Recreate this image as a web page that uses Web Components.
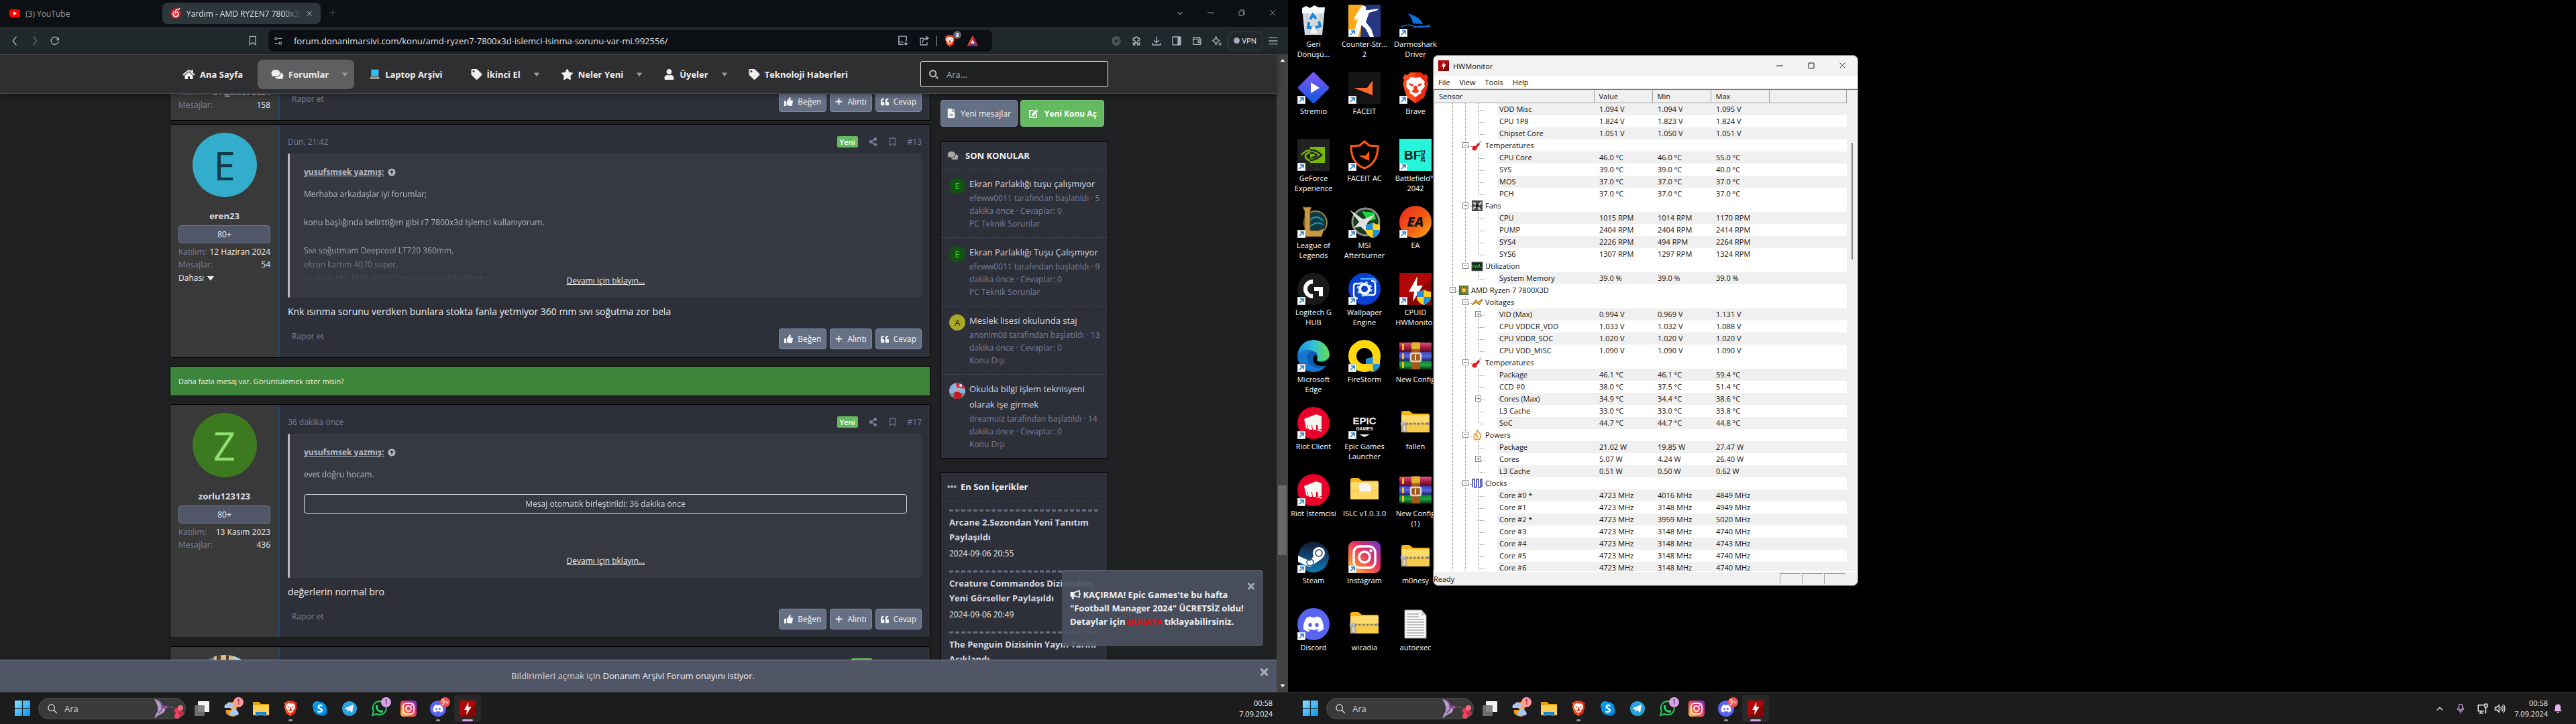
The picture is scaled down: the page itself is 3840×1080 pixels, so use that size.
<!DOCTYPE html>
<html lang="tr">
<head>
<meta charset="utf-8">
<title>Yardım - AMD RYZEN7 7800x3D</title>
<style>
  html, body { height: 100%; }
  body {
    margin: 0;
    display: flex;
    overflow: hidden;
    background: #000;
    color: #eee;
    font-family: "Open Sans", "Noto Sans", sans-serif;
    font-size: 12px;
  }
  browser-screen, desktop-screen { flex: 1 1 0; min-width: 0; }
</style>
</head>
<body>
<browser-screen></browser-screen>
<desktop-screen></desktop-screen>

<script>
// ---------- icons ----------
const fa = (w, d) => `<svg viewBox="0 0 ${w} 512" fill="currentColor"><path d="${d}"/></svg>`;
const line = (body, w = 2) => `<svg viewBox="0 0 24 24" fill="none" stroke="currentColor" stroke-width="${w}" stroke-linecap="round" stroke-linejoin="round">${body}</svg>`;
const app = (body) => `<svg viewBox="0 0 48 48">${body}</svg>`;

const lion = `<path d="M24 1h8l4 4 4-1 3 5-2 3 2 6-6 20-13 9L11 38 5 18l2-6-2-3 3-5 4 1 4-4z" fill="#ff4a1c"/><path d="M24 1h8l4 4 4-1 3 5-2 3 2 6-6 20-13 9z" fill="#f0280f"/>
<path d="M24 9l7-1 7 7-1 3 1 4-6 7 1 3-5 2-4-3-4 3-5-2 1-3-6-7 1-4-1-3 7-7z" fill="#fff"/><path d="M15 17l6 2-1 3-5-2zM33 17l-6 2 1 3 5-2zM22 21h4l1 6 3 2-6 4-6-4 3-2z" fill="#f2371a"/><path d="M24 31l5 3-5 4-5-4z" fill="#fff"/>`;
const shield = `<g transform="translate(26 25)"><path d="M10.500 0C7 2 4 3 0 3v8c0 6 5 10 10.500 12C16 21 21 17 21 11V3c-4 0-7-1-10.500-3z" fill="#fcd116"/><path d="M10.500 0C7 2 4 3 0 3v8h10.500zM10.500 11v12C16 21 21 17 21 11z" fill="#1e90e0"/></g>`;
const insta = `<defs><linearGradient id="ig" x1="0" y1="1" x2="1" y2="0"><stop offset="0" stop-color="#ffd35c"/><stop offset=".3" stop-color="#f9743a"/><stop offset=".6" stop-color="#e1306c"/><stop offset="1" stop-color="#6a35d0"/></linearGradient></defs>
<rect width="48" height="48" rx="9" fill="url(#ig)"/><g fill="none" stroke="#fff" stroke-width="3.500"><rect x="8" y="8" width="32" height="32" rx="9"/><circle cx="24" cy="24" r="8"/></g><circle cx="33.500" cy="14.500" r="2.300" fill="#fff"/>`;
const fist = `<circle cx="24" cy="24" r="24" fill="#eb0029"/><path d="M10 18l18-7 8 3v19l-5 1-1-7-2 0v7h-5l-1-7h-1l1 7-5 0-2-7h-1l2 6-3-1zM25 34l11 1v2z" fill="#f4f6f0"/>`;
const folder = `<path d="M3 9a3 3 0 0 1 3-3h9l5 4h23a2 2 0 0 1 2 2v25H3z" fill="#fbb519"/><rect x="3" y="12" width="42" height="26" rx="2" fill="#ffdb6e"/><rect x="3" y="24" width="42" height="14" rx="2" fill="#f7cb4c"/>`;
const zip = folder + `<path d="M8 25h37" stroke="#6e6e6e" stroke-width="3" stroke-dasharray="1 1"/><rect x="2" y="22" width="8" height="6" rx="1" fill="#bbb"/><path d="M5 27h5v10H5z" fill="#d8d8d8" stroke="#888"/><rect x="41" y="23" width="4" height="4" fill="#999"/>`;
const books = `<defs><linearGradient id="r" x1="0" y1="0" x2="0" y2="1"><stop offset="0" stop-color="#e2557b"/><stop offset=".5" stop-color="#a81d45"/><stop offset="1" stop-color="#5b0b22"/></linearGradient><linearGradient id="b" x1="0" y1="0" x2="0" y2="1"><stop offset="0" stop-color="#3b3fb0"/><stop offset=".5" stop-color="#5c68e0"/><stop offset="1" stop-color="#1b1d6b"/></linearGradient><linearGradient id="g" x1="0" y1="0" x2="0" y2="1"><stop offset="0" stop-color="#12762a"/><stop offset=".5" stop-color="#21a845"/><stop offset="1" stop-color="#063c10"/></linearGradient></defs>
<rect y="4" width="48" height="14" rx="1" fill="url(#r)"/><rect y="18" width="48" height="13" rx="1" fill="url(#b)"/><rect y="31" width="48" height="13" rx="1" fill="url(#g)"/><path d="M4 6h3v9H4zM4 20h3v9H4zM4 33h3v9H4z" fill="#f5b921"/><rect x="18" y="3" width="13" height="41" fill="#a65a1a"/><rect x="18" y="4" width="13" height="10" rx="3" fill="#e0b232"/><rect x="17" y="20" width="15" height="12" rx="2" fill="none" stroke="#d9d9d9" stroke-width="2.500"/><path d="M24 22v8" stroke="#eee" stroke-width="2"/>`;
const bolt = `<rect width="48" height="48" fill="#b00606"/><path d="M0 48L48 10v38z" fill="#8a0505"/><path d="M27 5L14 28h8l-2 15 15-24h-9z" fill="#fff"/>`;
const discordMark = `<path d="M20.317 4.3698a19.7913 19.7913 0 00-4.8851-1.5152.0741.0741 0 00-.0785.0371c-.211.3753-.4447.8648-.6083 1.2495-1.8447-.2762-3.68-.2762-5.4868 0-.1636-.3933-.4058-.8742-.6177-1.2495a.077.077 0 00-.0785-.037 19.7363 19.7363 0 00-4.8852 1.515.0699.0699 0 00-.0321.0277C.5334 9.0458-.319 13.5799.0992 18.0578a.0824.0824 0 00.0312.0561c2.0528 1.5076 4.0413 2.4228 5.9929 3.0294a.0777.0777 0 00.0842-.0276c.4616-.6304.8731-1.2952 1.226-1.9942a.076.076 0 00-.0416-.1057c-.6528-.2476-1.2743-.5495-1.8722-.8923a.077.077 0 01-.0076-.1277c.1258-.0943.2517-.1923.3718-.2914a.0743.0743 0 01.0776-.0105c3.9278 1.7933 8.18 1.7933 12.0614 0a.0739.0739 0 01.0785.0095c.1202.099.246.1981.3728.2924a.077.077 0 01-.0066.1276 12.2986 12.2986 0 01-1.873.8914.0766.0766 0 00-.0407.1067c.3604.698.7719 1.3628 1.225 1.9932a.076.076 0 00.0842.0286c1.961-.6067 3.9495-1.5219 6.0023-3.0294a.077.077 0 00.0313-.0552c.5004-5.177-.8382-9.6739-3.5485-13.6604a.061.061 0 00-.0312-.0286zM8.02 15.3312c-1.1825 0-2.1569-1.0857-2.1569-2.419 0-1.3332.9555-2.4189 2.157-2.4189 1.2108 0 2.1757 1.0952 2.1568 2.419 0 1.3332-.9555 2.4189-2.1569 2.4189zm7.9748 0c-1.1825 0-2.1569-1.0857-2.1569-2.419 0-1.3332.9554-2.4189 2.1569-2.4189 1.2108 0 2.1757 1.0952 2.1568 2.419 0 1.3332-.946 2.4189-2.1568 2.4189Z"/>`;
const discord = `<circle cx="24" cy="24" r="24" fill="#5865f2"/><g transform="translate(9 9) scale(1.250)" fill="#fff">${discordMark}</g>`;

const ICONS = {
  home: fa(576, "M280.37 148.26L96 300.11V464a16 16 0 0 0 16 16l112.06-.29a16 16 0 0 0 15.92-16V368a16 16 0 0 1 16-16h64a16 16 0 0 1 16 16v95.64a16 16 0 0 0 16 16.05L464 480a16 16 0 0 0 16-16V300L295.67 148.26a12.19 12.19 0 0 0-15.3 0zM571.6 251.47L488 182.56V44.05a12 12 0 0 0-12-12h-56a12 12 0 0 0-12 12v72.61L318.47 43a48 48 0 0 0-61 0L4.34 251.47a12 12 0 0 0-1.6 16.9l25.5 31A12 12 0 0 0 45.15 301l235.22-193.74a12.19 12.19 0 0 1 15.3 0L530.9 301a12 12 0 0 0 16.9-1.6l25.5-31a12 12 0 0 0-1.7-16.93z"),
  comments: fa(576, "M416 192c0-88.4-93.1-160-208-160S0 103.6 0 192c0 34.3 14.1 65.9 38 92-13.4 30.2-35.5 54.2-35.8 54.5-2.2 2.3-2.8 5.7-1.5 8.7S4.8 352 8 352c36.6 0 66.9-12.3 88.7-25 32.2 15.7 70.3 25 111.3 25 114.9 0 208-71.6 208-160zm122 220c23.9-26 38-57.7 38-92 0-66.9-53.5-124.2-129.3-148.1.9 6.6 1.3 13.3 1.3 20.1 0 105.9-107.7 192-240 192-10.8 0-21.3-.8-31.7-1.9C207.8 439.6 281.8 480 368 480c41 0 79.1-9.2 111.3-25 21.8 12.7 52.1 25 88.7 25 3.2 0 6.1-1.9 7.3-4.8 1.3-2.9.7-6.3-1.5-8.7-.3-.3-22.4-24.2-35.8-54.5z"),
  tag: fa(512, "M0 252.118V48C0 21.49 21.49 0 48 0h204.118a48 48 0 0 1 33.941 14.059l211.882 211.882c18.745 18.745 18.745 49.137 0 67.882L293.823 497.941c-18.745 18.745-49.137 18.745-67.882 0L14.059 286.059A48 48 0 0 1 0 252.118zM112 64c-26.51 0-48 21.49-48 48s21.49 48 48 48 48-21.49 48-48-21.49-48-48-48z"),
  star: fa(576, "M259.3 17.8L194 150.2 47.9 171.5c-26.2 3.8-36.7 36.1-17.7 54.6l105.7 103-25 145.5c-4.5 26.3 23.2 46 46.4 33.7L288 439.6l130.7 68.7c23.2 12.2 50.9-7.4 46.4-33.7l-25-145.5 105.7-103c19-18.5 8.5-50.8-17.7-54.6L382 150.2 316.7 17.8c-11.7-23.6-45.6-23.9-57.4 0z"),
  user: fa(448, "M224 256c70.7 0 128-57.3 128-128S294.7 0 224 0 96 57.3 96 128s57.3 128 128 128zm89.6 32h-16.7c-22.2 10.2-46.9 16-72.9 16s-50.6-5.8-72.9-16h-16.7C60.2 288 0 348.2 0 422.4V464c0 26.5 21.5 48 48 48h352c26.5 0 48-21.5 48-48v-41.6c0-74.2-60.2-134.4-134.4-134.4z"),
  search: fa(512, "M505 442.7L405.3 343c-4.5-4.5-10.6-7-17-7H372c27.6-35.3 44-79.7 44-128C416 93.1 322.9 0 208 0S0 93.1 0 208s93.1 208 208 208c48.3 0 92.7-16.4 128-44v16.3c0 6.4 2.5 12.5 7 17l99.7 99.7c9.4 9.4 24.6 9.4 33.9 0l28.3-28.3c9.4-9.4 9.4-24.6.1-34zM208 336c-70.7 0-128-57.2-128-128 0-70.7 57.2-128 128-128 70.7 0 128 57.2 128 128 0 70.7-57.2 128-128 128z"),
  thumb: fa(512, "M104 224H24c-13.255 0-24 10.745-24 24v240c0 13.255 10.745 24 24 24h80c13.255 0 24-10.745 24-24V248c0-13.255-10.745-24-24-24zM384 81.452c0 42.416-25.97 66.208-33.277 94.548h101.723c33.397 0 59.397 27.746 59.553 58.098.084 17.938-7.546 37.249-19.439 49.197l-.11.11c9.836 23.337 8.237 56.037-9.308 79.469 8.681 25.895-.069 57.704-16.382 74.757 4.298 17.598 2.244 32.575-6.148 44.632C440.202 511.587 389.616 512 346.839 512l-2.845-.001c-48.287-.017-87.806-17.598-119.56-31.725-15.957-7.099-36.821-15.887-52.651-16.178-6.54-.12-11.783-5.457-11.783-11.998v-213.77c0-3.2 1.282-6.271 3.558-8.521 39.614-39.144 56.648-80.587 89.117-113.111 14.804-14.832 20.188-37.236 25.393-58.902C282.515 39.293 291.817 0 312 0c24 0 72 8 72 81.452z"),
  plus: fa(512, "M214 32h84v182h182v84H298v182h-84V298H32v-84h182z"),
  quote: fa(512, "M464 256h-80v-64c0-35.3 28.7-64 64-64h8c13.3 0 24-10.7 24-24V56c0-13.3-10.7-24-24-24h-8c-88.4 0-160 71.6-160 160v240c0 26.5 21.5 48 48 48h128c26.5 0 48-21.5 48-48V304c0-26.5-21.5-48-48-48zm-288 0H96v-64c0-35.3 28.7-64 64-64h8c13.3 0 24-10.7 24-24V56c0-13.3-10.7-24-24-24h-8C71.6 32 0 103.6 0 192v240c0 26.5 21.5 48 48 48h128c26.5 0 48-21.5 48-48V304c0-26.5-21.5-48-48-48z"),
  share: fa(448, "M352 320c-22.608 0-43.387 7.819-59.79 20.895l-102.486-64.054a96.551 96.551 0 0 0 0-41.683l102.486-64.054C308.613 184.181 329.392 192 352 192c53.019 0 96-42.981 96-96S405.019 0 352 0s-96 42.981-96 96c0 7.158.79 14.13 2.276 20.841L155.79 180.895C139.387 167.819 118.608 160 96 160c-53.019 0-96 42.981-96 96s42.981 96 96 96c22.608 0 43.387-7.819 59.79-20.895l102.486 64.054A96.301 96.301 0 0 0 256 416c0 53.019 42.981 96 96 96s96-42.981 96-96-42.981-96-96-96z"),
  times: fa(352, "M242.72 256l100.07-100.07c12.28-12.28 12.28-32.19 0-44.48l-22.24-22.24c-12.28-12.28-32.19-12.28-44.48 0L176 189.28 75.93 89.21c-12.28-12.28-32.19-12.28-44.48 0L9.21 111.45c-12.28 12.28-12.28 32.19 0 44.48L109.28 256 9.21 356.07c-12.28 12.28-12.28 32.19 0 44.48l22.24 22.24c12.28 12.28 32.2 12.28 44.48 0L176 322.72l100.07 100.07c12.28 12.28 32.2 12.28 44.48 0l22.24-22.24c12.28-12.28 12.28-32.19 0-44.48L242.72 256z"),
  caret: fa(512, "M40 130h432L256 420z"),
  caretUp: fa(512, "M40 400h432L256 130z"),
  file: fa(384, "M224 136V0H24C10.700 0 0 10.700 0 24v464c0 13.300 10.700 24 24 24h336c13.300 0 24-10.700 24-24V160H248c-13.200 0-24-10.800-24-24zm64 236c0 6.600-5.400 12-12 12H108c-6.600 0-12-5.400-12-12v-8c0-6.600 5.400-12 12-12h168c6.600 0 12 5.400 12 12v8zm0-72v8c0 6.600-5.400 12-12 12H108c-6.600 0-12-5.400-12-12v-8c0-6.600 5.400-12 12-12h168c6.600 0 12 5.400 12 12zm96-178v6H256V0h6.100c6.400 0 12.500 2.500 17 7l97.900 98c4.500 4.500 7 10.600 7 17z"),
  edit: `<svg viewBox="0 0 24 24"><path d="M13 5H3v16h16v-9" fill="none" stroke="currentColor" stroke-width="3"/><path d="M8 13L18 3l4 4-10 10H8zM19 2l1-1 4 4-1 1z" fill="currentColor"/></svg>`,
  dots: `<svg viewBox="0 0 24 24" fill="currentColor"><circle cx="4" cy="12" r="3.600"/><circle cx="12" cy="12" r="3.600"/><circle cx="20" cy="12" r="3.600"/></svg>`,
  horn: `<svg viewBox="0 0 24 24" fill="none" stroke="currentColor"><path d="M9 7.500L21 3v15L9 14.500" stroke-width="2.500"/><path d="M1 6h9v10H1zM3 16h5l1 6H5z" fill="currentColor" stroke="none"/><path d="M22 8v5" stroke-width="3"/></svg>`,
  up: `<svg viewBox="0 0 24 24"><circle cx="12" cy="12" r="11" fill="currentColor"/><path d="M12 18V7M7 12l5-5 5 5" stroke="#363942" stroke-width="3" fill="none"/></svg>`,
  bookmark: line(`<path d="M5 2h14v20l-7-5-7 5z"/>`),
  laptop: `<svg viewBox="0 0 24 24"><rect x="4" y="1" width="17" height="14" fill="#8a7fb5"/><rect x="5" y="2" width="15" height="12" fill="#27c3fb"/><path d="M4 16h17l2 6H1z" fill="#bdbdbd"/><path d="M4 17h16v3H4z" fill="#8d8d8d"/></svg>`,
  back: line(`<path d="M15 3l-7 9 7 9"/>`), fwd: line(`<path d="M9 3l7 9-7 9"/>`),
  reload: line(`<path d="M20 14a8.500 8.500 0 1 1-1-7"/><path d="M20 5v5h-5" fill="currentColor"/>`),
  tune: line(`<circle cx="6" cy="6" r="3"/><path d="M12 6h9M3 18h9"/><circle cx="17" cy="18" r="3"/>`),
  reader: line(`<path d="M20 12V3H4v17h9M4 15h9M19 14v7m-3-3l3 3 3-3"/>`),
  send: line(`<path d="M10 6H3v15h15v-5M8 16c0-7 4-10 12-10M16 2l5 4-5 4"/>`),
  chev: line(`<path d="M5 9l7 7 7-7"/>`, 3), chevUp: line(`<path d="M5 16l7-7 7 7"/>`, 2),
  min: line(`<path d="M3 12h18"/>`, 2), max: line(`<rect x="4" y="4" width="16" height="16" rx="2"/>`, 2),
  restore: line(`<rect x="4" y="7" width="13" height="14" rx="2"/><path d="M8 4h11q1 0 1 1v12"/>`, 2),
  close: line(`<path d="M4 4l16 16M20 4L4 20"/>`, 2), add: line(`<path d="M12 3v18M3 12h18"/>`, 2),
  ring: line(`<circle cx="12" cy="12" r="9"/><circle cx="12" cy="12" r="5"/>`, 2),
  puzzle: line(`<path d="M5 6h4a3 3 0 1 1 6 0h4v5a3 3 0 1 0 0 5v5h-5a3 3 0 1 0-5 0H5v-5a3 3 0 1 0 0-5z"/>`),
  down: line(`<path d="M12 3v13m-5-5l5 5 5-5M3 17v4h18v-4"/>`),
  panel: line(`<rect x="3" y="3" width="18" height="18" rx="1"/><path d="M15 4h5v16h-5z" fill="currentColor"/>`),
  wallet: line(`<path d="M4 4h15v4M4 4v16h17V8H4M21 12h-6v4h6"/>`),
  leo: line(`<path d="M10 2c1 6 3 8 8 9-5 2-7 4-8 10-1-6-3-8-8-10 5-1 7-3 8-9zM19 16v6m-3-3h6"/>`),
  menu: line(`<path d="M3 5h18M3 12h18M3 19h18"/>`),
  glass: line(`<circle cx="10" cy="10" r="7"/><path d="M15.500 15.500L22 22"/>`, 2),
  youtube: `<svg viewBox="0 0 24 24"><rect y="3" width="24" height="18" rx="5" fill="#f00"/><path d="M9 8l8 4-8 4z" fill="#fff"/></svg>`,
  forum: `<svg viewBox="0 0 24 24"><circle cx="12" cy="12" r="11.500" fill="#d51c22"/><path d="M9 8a6 6 0 1 0 6 0M12 5v9M12 4c6-1 8-2 9-4" fill="none" stroke="#fff" stroke-width="2.500"/></svg>`,
  bat: `<svg viewBox="0 0 24 24"><path d="M12 1l11 21H1z" fill="#ff4724"/><path d="M12 1l11 21-11-7z" fill="#9e1f63"/><path d="M1 22l11-7 11 7z" fill="#662d91"/><path d="M12 10l4 7H8z" fill="#fff"/></svg>`,
  brave: app(lion),
  win: `<svg viewBox="0 0 24 24"><defs><linearGradient id="w" x1="0" y1="0" x2="1" y2="1"><stop offset="0" stop-color="#86e0ff"/><stop offset="1" stop-color="#0a94f0"/></linearGradient></defs><path d="M0 0h11.400v11.400H0zM12.600 0H24v11.400H12.600zM0 12.600h11.400V24H0zM12.600 12.600H24V24H12.600z" fill="url(#w)"/></svg>`,
  bird: `<svg viewBox="0 0 46 32"><path d="M2 2c7 1 12 6 13 12l8-1-5 4c0 6-6 7-10 9l-6 5 3-8c4-4 3-12-3-21z" fill="#b59bc6"/><path d="M8 4c5 3 6 8 5 14l-5 5" fill="none" stroke="#7d5d99" stroke-width="2"/><path d="M12 15l5-4 6 2-5 3z" fill="#9c3dab"/><path d="M23 13l9 2" stroke="#666"/><circle cx="36" cy="19" r="4" fill="#e83d5d"/><circle cx="41" cy="15" r="4" fill="#f46c7c"/><circle cx="42" cy="23" r="4" fill="#c92a48"/><circle cx="36" cy="27" r="4" fill="#ea4766"/></svg>`,
  tasks: `<svg viewBox="0 0 24 24"><rect x="6" y="1" width="17" height="16" rx="1" fill="#f4f4f4"/><rect x="1" y="7" width="15" height="16" rx="1" fill="#777" opacity=".9"/></svg>`,
  weather: `<svg viewBox="0 0 24 24"><circle cx="15" cy="8" r="6" fill="#ffb01e"/><path d="M4 14a10 8 0 0 0 16 8l-8-8z" fill="#f39a20"/><path d="M2 11a4 4 0 0 1 3-6 5 5 0 0 1 9 0q3 3 0 6zM10 22a4 4 0 0 1 2-6 4 4 0 0 1 8-1q4 2 2 7z" fill="#a9c4f5"/></svg>`,
  explorer: `<svg viewBox="0 0 24 24"><path d="M0 2h9l3 3h12v17H0z" fill="#e8a30c"/><path d="M0 7h24v15H0z" fill="#ffd04f"/><path d="M4 23v-6h16v6h-4v-2H8v2z" fill="#1583d8"/></svg>`,
  skype: `<svg viewBox="0 0 24 24"><circle cx="8" cy="8" r="7" fill="#00a8f0"/><circle cx="16" cy="16" r="7" fill="#0078d4"/><circle cx="12" cy="12" r="10" fill="#0594e5"/><text x="12" y="18" font-size="16" font-weight="700" text-anchor="middle" fill="#fff">S</text></svg>`,
  telegram: `<svg viewBox="0 0 24 24"><circle cx="12" cy="12" r="11" fill="#2ba2de"/><path d="M4 12l14-6-2 12-5-4-2 3-1-4z" fill="#fff"/><path d="M8 13l8-5-6 6" fill="#a9cfe5"/></svg>`,
  whatsapp: `<svg viewBox="0 0 24 24"><path d="M2 22l2-6a10 10 0 1 1 4 4z" fill="none" stroke="#25d366" stroke-width="2"/><path d="M8 7l2 0 1 3-1 1q1 3 4 4l1-1 3 1v2q-2 2-4 1-6-2-7-7-1-2 1-4z" fill="#25d366"/></svg>`,
  instagram: app(insta), discord: app(discord), hwm: app(bolt),
  tray: line(`<path d="M14 5H3v12h11M8 17v4M5 21h8M16 3h5v6h-5zM18 9v12"/>`, 2),
  mic: line(`<rect x="8" y="2" width="8" height="13" rx="4"/><path d="M5 11a7 7 0 0 0 14 0M12 18v4"/>`),
  vol: line(`<path d="M2 9v6h4l5 5V4L6 9zM15 9q2 3 0 6M18 6q4 6 0 12M21 3q6 9 0 18"/>`, 2),
  bell: `<svg viewBox="0 0 24 24" fill="#e7b3f0"><path d="M12 1a7 7 0 0 1 7 7v6l3 5H2l3-5V8a7 7 0 0 1 7-7zM9 20h6a3 3 0 0 1-6 0z"/></svg>`,
  flag: app(`<clipPath id="fc"><circle cx="24" cy="24" r="24"/></clipPath><g clip-path="url(#fc)"><rect width="48" height="48" fill="#8db4de"/><path d="M0 30h48v18H0z" fill="#8b8580"/><path d="M20 0h28v18l-26-4z" fill="#e2263c"/><circle cx="34" cy="8" r="4" fill="#fff"/><path d="M12 48l4-20 10-2 10 6 3 16z" fill="#c31a24"/><circle cx="25" cy="21" r="5" fill="#d6a483"/></g>`),
  photo: app(`<clipPath id="pc"><circle cx="24" cy="24" r="24"/></clipPath><g clip-path="url(#pc)"><rect width="48" height="48" fill="#4a6d8c"/><path d="M16 0h16v30H14z" fill="#d8bc8e"/><path d="M18 0h3v20h-3zM25 0h2v20h-2z" fill="#4f3a2c"/><path d="M31 0h17v30H30z" fill="#a4dcea"/></g>`),
  // desktop
  bin: app(`<path d="M7 5l34-1-4 41-26 0z" fill="#d5d9dd"/><path d="M7 5l6-3 6 3 6-4 7 3 9 0-2 9-32 0z" fill="#f7f8f9"/><path d="M13 14l6 30M35 14l-5 30M24 30l-8 14h18z" stroke="#b7bdc2" fill="#eef0f2"/><g fill="none" stroke="#1984d8" stroke-width="4"><path d="M19 22l4-7 5 6M32 25l2 7-7 2M21 34h-5l1-8"/></g>`),
  cs: app(`<rect width="48" height="48" fill="#fba919"/><path d="M22 0h26v48H18z" fill="#27377f"/><path d="M18 5q3-6 8-2v5l4 0 14-2v2l-13 4-3 8-2 6 8 10 4 12h-6l-6-12-7-6-2 9-3 9h-5l2-18 4-10-5 4-1-5 6-10z" fill="#fff"/>`),
  shark: app(`<path d="M12 13q18 4 23 16l-15-1q-1-9-8-15z" fill="#0a6fe0"/><path d="M2 33q12-5 20-1t24-2M20 34q12-3 26-1" fill="none" stroke="#0a6fe0" stroke-width="1.500"/>`),
  stremio: app(`<defs><linearGradient id="s" x1="0" y1="0" x2="1" y2="1"><stop offset="0" stop-color="#8257ff"/><stop offset="1" stop-color="#1157dd"/></linearGradient></defs><rect x="7" y="7" width="34" height="34" rx="2" transform="rotate(45 24 24)" fill="url(#s)"/><path d="M20 16l13 8-13 8z" fill="#fff"/>`),
  faceit: app(`<rect width="48" height="48" rx="1" fill="#151515"/><path d="M8 24l20 0 8-11v22z" fill="#ff6a2b"/>`),
  nvidia: app(`<rect width="48" height="48" fill="#222"/><rect x="19" y="12" width="22" height="24" fill="#76b900"/><path d="M6 24q12-14 30 0-14 14-22 6-6-6 5-10 7-1 11 4-5 6-9 3-2-4 3-5" fill="none" stroke="#76b900" stroke-width="2.500"/><path d="M19 17q9-1 17 7-8 8-17 8M19 21q8 0 10 4-4 4-9 3" fill="none" stroke="#222" stroke-width="2.500"/>`),
  faceitac: app(`<path d="M24 4l7 6 13 1q0 26-20 33Q4 37 4 11l13-1z" fill="none" stroke="#ff5a0a" stroke-width="3"/><path d="M15 25l11 0 5-7v15z" fill="#ff5a0a"/>`),
  bf: app(`<rect width="48" height="48" fill="#27f5d9"/><text x="7" y="31" font-size="19" font-family="Liberation Sans" font-weight="700" fill="#0a1a1c">BF</text><g transform="translate(38 35) rotate(-90)"><text font-size="8" font-weight="700" fill="#0a1a1c">2042</text></g>`),
  lol: app(`<circle cx="27" cy="25" r="17" fill="#0b3a45" stroke="#a87a32" stroke-width="2"/><path d="M18 22q10-10 20 0M20 30q10-8 18-2" fill="none" stroke="#2a9aa0" stroke-width="2"/><path d="M8 2h13l-2 5v30h13l8-3-4 12H8l3-6V8z" fill="#c9994a" stroke="#6b4816"/>`),
  msi: app(`<circle cx="26" cy="24" r="20" fill="#153b1b" stroke="#8b8b8b" stroke-width="3"/><path d="M20 8l18 2 3 10-12 3z" fill="#17d73b"/><path d="M2 6l20 14 18-7-12 13 2 16-12-11-10 2 8-9z" fill="#dfe0e0"/>` + shield),
  ea: app(`<defs><linearGradient id="e" x1="0" y1="0" x2="1" y2="1"><stop offset="0" stop-color="#e8241b"/><stop offset=".6" stop-color="#f26414"/><stop offset="1" stop-color="#f7b417"/></linearGradient></defs><circle cx="24" cy="24" r="24" fill="url(#e)"/><text x="24" y="31" font-size="20" font-style="italic" font-weight="800" text-anchor="middle" fill="#14100f">EA</text>`),
  ghub: app(`<circle cx="24" cy="24" r="24" fill="#1a1a1a"/><path d="M23 13a11 11 0 0 0 0 22M25 24h10v11" fill="none" stroke="#fff" stroke-width="6"/>`),
  wallpaper: app(`<circle cx="24" cy="24" r="24" fill="#0a3fd0"/><path d="M14 38q-6 0-6-6V20q0-4 4-4h16M34 12q6 0 6 5v12q0 4-4 4H22" fill="none" stroke="#fff" stroke-width="2.500"/><path d="M18 9h18q5 0 5 6" fill="none" stroke="#4fb4ff" stroke-width="2.500"/><circle cx="24" cy="24" r="7" fill="none" stroke="#fff" stroke-width="4"/><circle cx="24" cy="24" r="10" fill="none" stroke="#9ed2ff" stroke-width="3" stroke-dasharray="4 4"/>`),
  cpuid: app(bolt + shield),
  edge: app(`<defs><linearGradient id="eg" x1="0" y1="0" x2="1" y2="0"><stop offset="0" stop-color="#1890e0"/><stop offset=".5" stop-color="#35c1d8"/><stop offset="1" stop-color="#62e04c"/></linearGradient></defs><clipPath id="ec"><circle cx="24" cy="24" r="24"/></clipPath><g clip-path="url(#ec)"><circle cx="24" cy="24" r="24" fill="#0d5cae"/><path d="M0 22Q3 0 25 0q21 2 23 20 0 11-13 12-8 0-6-6 3-6-5-9-14-4-24 5z" fill="url(#eg)"/><path d="M0 22q10-11 22-6-12 6-5 19 10 11 27 5Q32 52 14 46-1 38 0 22z" fill="#1476cf"/><path d="M30 27q-3 6 6 6 8 0 12-7v8l-4 4q-18 4-21-8 0-6 4-8 3 2 3 5z" fill="#000"/></g>`),
  firestorm: app(`<circle cx="24" cy="24" r="18" fill="none" stroke="#ffd90a" stroke-width="12"/>` + shield),
  riot: app(fist),
  epic: app(`<g fill="#f2f2f2" font-weight="700" text-anchor="middle" font-family="Liberation Sans"><text x="24" y="26" font-size="15">EPIC</text><text x="24" y="35" font-size="7">GAMES</text></g><path d="M16 41h16l-8 4z" fill="#f2f2f2"/>`),
  zip: app(zip), books: app(books),
  isl: app(folder + `<path d="M16 14h13l5 5v7H16z" fill="#f5f5f5"/><path d="M3 26h42v12H3z" fill="#ffd766"/>`),
  steam: app(`<defs><linearGradient id="st" x1="0" y1="0" x2="0" y2="1"><stop offset="0" stop-color="#131a36"/><stop offset="1" stop-color="#1079b5"/></linearGradient></defs><circle cx="24" cy="24" r="23" fill="url(#st)"/><path d="M1 22l18 8 8-12 10 8-13 9-5 4-18-8z" fill="#fff"/><circle cx="32" cy="18" r="9" fill="#fff"/><circle cx="32" cy="18" r="5" fill="none" stroke="#1c3050" stroke-width="1.500"/><circle cx="19" cy="32" r="5" fill="none" stroke="#1c4f80" stroke-width="1.500"/>`),
  text: app(`<path d="M8 3h25l7 8v34H8z" fill="#f7f7f7" stroke="#999"/><path d="M33 3v8h7z" fill="#ccc"/><path d="M11 9h18M11 13h18M11 17h26M11 21h26M11 25h26M11 29h26M11 33h26M11 37h26M11 41h26" stroke="#888"/>`),
  // sensor tree
  temp: `<svg viewBox="0 0 16 16"><path d="M14 1L6 10" stroke="#ccc" stroke-width="3"/><path d="M11 5L5 12" stroke="#e01515" stroke-width="3"/><circle cx="4" cy="12" r="3.500" fill="#e81616"/></svg>`,
  fan: `<svg viewBox="0 0 16 16"><rect width="16" height="16" fill="#484848"/><path d="M8 7Q4 0 1 4l5 4Q0 9 2 14l6-5q1 7 6 5L10 8q7-2 4-7z" fill="#c5c5c5"/><circle cx="8" cy="8" r="2.500" fill="#111"/></svg>`,
  util: `<svg viewBox="0 0 16 16"><rect y="2" width="16" height="13" fill="#142418" stroke="#777"/><path d="M1 10l2-4 2 5 2-5 2 5 2-6 1 5 3-1" fill="none" stroke="#21d643"/></svg>`,
  cpu: `<svg viewBox="0 0 16 16"><rect width="16" height="16" fill="#1d5a34"/><rect x="2" y="2" width="12" height="12" fill="none" stroke="#e3bd2e" stroke-width="2" stroke-dasharray="1 1"/><rect x="4" y="4" width="8" height="8" fill="#e3a62e"/><rect x="6" y="6" width="4" height="4" fill="#f9d96a"/></svg>`,
  volt: `<svg viewBox="0 0 16 16"><path d="M0 12L6 4l3 4 7-5-5 9-4-4z" fill="#f2b632" stroke="#8a5a0a"/></svg>`,
  power: `<svg viewBox="0 0 16 16"><path d="M8 1q6 6 5 10-1 4-5 4t-5-4q0-3 2-5l1 2q2-3 2-7zM8 8v5" fill="none" stroke="#ef8a1e" stroke-width="1.500"/></svg>`,
  clock: `<svg viewBox="0 0 16 16"><path d="M1 14V2h3v12h3V2h3v12h3V2h2v12" fill="none" stroke="#3440a8" stroke-width="1.500"/></svg>`
};

class UiIcon extends HTMLElement {
  connectedCallback() {
    if (this.shadowRoot) return;
    const size = this.getAttribute("size") || "16";
    const [w, h] = size.split("x");
    this.attachShadow({ mode: "open" }).innerHTML = `
      <style>
        :host { display: inline-flex; flex: none; width: ${w}px; height: ${h || w}px; }
        svg { display: block; width: 100%; height: 100%; overflow: visible; }
      </style>${ICONS[this.getAttribute("name")]}`;
  }
}
customElements.define("ui-icon", UiIcon);

const RESET = `
  :host, * { box-sizing: border-box; }
  button, input { font: inherit; color: inherit; background: none; border: 0; padding: 0; margin: 0; outline: 0; }
  a { color: inherit; text-decoration: none; }
`;
const ic = (name, size = 16) => `<ui-icon name="${name}" size="${size}"></ui-icon>`;

// base class: subclasses return their markup from render()
class Base extends HTMLElement {
  connectedCallback() {
    if (this.shadowRoot) return;
    this.attachShadow({ mode: "open" }).innerHTML = this.render();
  }
  attr(n) { return this.getAttribute(n) || ""; }
}

// ---------- browser chrome ----------
class TabStrip extends Base {
  render() {
    return `<style>${RESET}
      :host { display: flex; align-items: center; height: 40px; background: #0c0f14; color: #989da1; }
      .tab { display: flex; align-items: center; gap: 8px; height: 32px; width: 236px; padding: 0 12px 0 14px; text-align: left; }
      .tab span { flex: 1; white-space: nowrap; overflow: hidden; }
      .first { width: 242px; }
      .active { background: #2d363b; border-radius: 8px; color: #dfe3e5; padding-left: 12px; margin-right: 12px; }
      .active span { -webkit-mask-image: linear-gradient(90deg, #000 85%, transparent); }
      .wins { margin-left: auto; display: flex; gap: 32px; padding-right: 16px; color: #8e9398; }
      .wins button { width: 14px; height: 16px; }
      .add { color: #41494d; }
    </style>
    <button class="tab first">${ic("youtube")}<span>(3) YouTube</span></button>
    <button class="tab active">${ic("forum")}<span>Yardım - AMD RYZEN7 7800x3D</span>${ic("close", 10)}</button>
    <button class="add" aria-label="Yeni sekme">${ic("add", 12)}</button>
    <div class="wins">
      <button aria-label="Sekmeler">${ic("chev", 10)}</button><button aria-label="Küçült">${ic("min", 12)}</button>
      <button aria-label="Geri yükle">${ic("restore", 12)}</button><button aria-label="Kapat">${ic("close", 12)}</button>
    </div>`;
  }
}
customElements.define("tab-strip", TabStrip);

class AddressBar extends Base {
  render() {
    return `<style>${RESET}
      :host { display: flex; align-items: center; height: 41px; background: #21282c; color: #a4b4ba; }
      button { display: inline-flex; }
      .nav { display: flex; align-items: center; gap: 14px; width: 400px; padding: 0 16px 0 14px; }
      .nav .mark { margin-left: auto; }
      .dim { opacity: .5; }
      .url { display: flex; align-items: center; gap: 16px; width: 1079px; height: 32px; border-radius: 8px; background: #0c0f14; padding: 0 20px 0 8px; }
      .url input { flex: 1; min-width: 0; color: #e3e6e8; font-size: 13px; }
      .url i { width: 1px; height: 16px; background: #9aa5aa; margin: 0 -6px; }
      .shield { position: relative; }
      .shield b { position: absolute; right: -8px; top: -6px; width: 12px; height: 12px; border-radius: 6px; background: #5d6670; color: #fff; font-size: 8px; line-height: 12px; text-align: center; }
      .tools { margin-left: auto; display: flex; align-items: center; gap: 14px; padding-right: 14px; }
      .vpn { gap: 4px; align-items: center; height: 28px; padding: 0 8px; border: 1px solid #3b454a; border-radius: 8px; color: #e8ecee; font-size: 11px; margin: 0 -6px; }
      .vpn i { width: 9px; height: 9px; border-radius: 5px; background: #a7a7bd; }
    </style>
    <div class="nav">
      <button aria-label="Geri">${ic("back")}</button><button class="dim" aria-label="İleri">${ic("fwd")}</button>
      <button aria-label="Yenile">${ic("reload")}</button><button class="mark" aria-label="Yer imi">${ic("bookmark", 15)}</button>
    </div>
    <div class="url">${ic("tune", 14)}
      <input aria-label="Adres" value="forum.donanimarsivi.com/konu/amd-ryzen7-7800x3d-islemci-isinma-sorunu-var-mi.992556/">
      <button aria-label="Okuyucu">${ic("reader", 17)}</button><button aria-label="Paylaş">${ic("send")}</button><i></i>
      <button class="shield" aria-label="Brave Shields">${ic("brave", 18)}<b>8</b></button><button aria-label="Ödüller">${ic("bat", 18)}</button>
    </div>
    <div class="tools">
      <button class="dim" aria-label="Eklenti">${ic("ring")}</button><button aria-label="Eklentiler">${ic("puzzle")}</button>
      <button aria-label="İndirilenler">${ic("down")}</button><button aria-label="Kenar çubuğu">${ic("panel")}</button>
      <button aria-label="Cüzdan">${ic("wallet")}</button><button aria-label="Leo">${ic("leo")}</button>
      <button class="vpn"><i></i>VPN</button><button aria-label="Menü">${ic("menu")}</button>
    </div>`;
  }
}
customElements.define("address-bar", AddressBar);

class ForumNav extends Base {
  render() {
    const items = [["home", "Ana Sayfa"], ["comments", "Forumlar", 1], ["laptop", "Laptop Arşivi"], ["tag", "İkinci El", 1],
      ["star", "Neler Yeni", 1], ["user", "Üyeler", 1], ["tag", "Teknoloji Haberleri"]];
    return `<style>${RESET}
      :host { display: flex; align-items: center; gap: 2px; height: 59px; padding: 0 251px 0 252px; background: #2f2f31; border: solid #474747; border-width: 1px 0; box-shadow: 0 2px 8px #0006; position: relative; }
      a { display: flex; align-items: center; gap: 7px; height: 44px; padding: 0 20px; border-radius: 8px; font-weight: 700; font-size: 13px; color: #efefef; white-space: nowrap; }
      a .c { color: #999; margin-left: 12px; }
      a.has { padding-right: 9px; }
      a.on { background: #5f5f61; }
      label { margin-left: auto; display: flex; align-items: center; gap: 12px; width: 280px; height: 39px; padding: 0 12px; border: 1px solid #eee; border-radius: 3px; background: #1f2021; color: #aaa; }
      input { flex: 1; font-size: 13px; }
      input::placeholder { color: #aaa; }
    </style>
    ${items.map(([i, t, c]) => `<a href="#" class="${c ? "has" : ""} ${i == "comments" ? "on" : ""}">${ic(i, i == "tag" || i == "user" || i == "laptop" ? "17x16" : "19x16")}${t}${c ? `<span class="c">${ic("caret", 10)}</span>` : ""}</a>`).join("")}
    <label>${ic("search", 14)}<input aria-label="Ara" placeholder="Ara..."></label>`;
  }
}
customElements.define("forum-nav", ForumNav);

// ---------- forum ----------
class PostButton extends Base {
  render() {
    return `<style>${RESET}
      :host { display: block; }
      button { display: flex; align-items: center; gap: 7px; height: 31px; padding: 0 7px; border: 1px solid #808ba5; border-radius: 4px; background: #667085; color: #f4f4f6; white-space: nowrap; }
      :host([kind="side"]) button { height: 40px; gap: 8px; padding: 0 9px; }
      :host([kind="new"]) button { height: 40px; gap: 8px; padding: 0 10px; background: #64ba60; border-color: #83c980; color: #fff; font-weight: 700; }
    </style><button>${ic(this.attr("icon"), this.attr("size") || 12)}<slot></slot></button>`;
  }
}
customElements.define("post-button", PostButton);

class ForumPost extends Base {
  render() {
    const name = this.attr("name");
    return `<style>${RESET}
      :host { display: flex; border: 1px solid #000; border-radius: 2px; background: #2d3039; }
      .user { display: flex; flex-direction: column; align-items: stretch; width: 163px; flex: none; padding: 12px 12px 13px 12px; background: #393939; border-right: 2px solid #0d4f74; }
      .avatar { align-self: center; display: flex; align-items: center; justify-content: center; width: 96px; height: 96px; border-radius: 50%; background: var(--avatar); color: var(--letter); font-size: 58px; }
      .name { margin: 18px 0 3px; line-height: 20px; font-size: 13px; font-weight: 700; text-align: center; color: #dcdce6; }
      .rank { height: 27px; margin: 1px 0 3px; border: 1px solid #6b7690; border-radius: 4px; background: #515768; line-height: 25px; text-align: center; }
      dl { margin: 0; }
      dl div { display: flex; justify-content: space-between; line-height: 19px; }
      dt { color: #787e9b; } dd { margin: 0; }
      .more { display: flex; align-items: center; gap: 4px; line-height: 21px; }
      .main { flex: 1; min-width: 0; display: flex; flex-direction: column; padding: 12px; }
      .head { display: flex; align-items: center; gap: 16px; height: 26px; margin-bottom: 5px; color: #787e9b; }
      .head time { flex: 1; }
      .head b { padding: 0 4px; border-radius: 2px; background: #64ba60; color: #fff; font-size: 11px; font-weight: 600; line-height: 17px; }
      .head a { display: flex; }
      .text { margin: 9px 0 13px; font-size: 14px; line-height: 24px; color: #efefef; }
      .foot { display: flex; gap: 5px; margin-top: auto; color: #787e9b; }
      .foot > a { margin: 3px auto 0 6px; }
      :host([tail]) .user { justify-content: flex-end; }
      :host([tail]) .main { justify-content: flex-end; }
    </style>
    <div class="user">
      ${this.hasAttribute("tail") ? "" : name ? `<div class="avatar">${name[0].toUpperCase()}</div>
      <div class="name">${name}</div><div class="rank">80+</div>` : `<div class="avatar">${ic("photo", 96)}</div>`}
      ${this.attr("joined") ? `<dl><div><dt>Katılım:</dt><dd>${this.attr("joined")}</dd></div><div><dt>Mesajlar:</dt><dd>${this.attr("posts")}</dd></div></dl>` : ""}
      ${this.hasAttribute("more") ? `<button class="more">Dahası ${ic("caret", 12)}</button>` : ""}
    </div>
    <div class="main">
      ${this.hasAttribute("tail") ? "" : `<div class="head"><time>${this.attr("date")}</time><b>Yeni</b><a href="#" aria-label="Paylaş">${ic("share", 13)}</a><a href="#" aria-label="Yer imi">${ic("bookmark", 13)}</a><a href="#">${this.attr("num")}</a></div>
      <slot name="quote"></slot>
      <div class="text"><slot></slot></div>`}
      ${this.hasAttribute("nofoot") ? "" : `<div class="foot"><a href="#">Rapor et</a>
        <post-button icon="thumb" size="13">Beğen</post-button><post-button icon="plus" size="11">Alıntı</post-button><post-button icon="quote">Cevap</post-button></div>`}
    </div>`;
  }
}
customElements.define("forum-post", ForumPost);

class QuoteBox extends Base {
  render() {
    return `<style>${RESET}
      :host { display: block; position: relative; height: 215px; padding: 17px 22px 16px 21px; border-left: 3px solid #b9b7c4; border-radius: 2px; background: #363942; color: #b6bac6; line-height: 21px; }
      .by { display: flex; align-items: center; gap: 6px; font-weight: 700; text-decoration: underline; margin-bottom: 12px; }
      .body { height: 142px; overflow: hidden; -webkit-mask-image: linear-gradient(#000 60%, #0000 100%); }
      .all { position: absolute; left: 0; right: 0; bottom: 15px; text-align: center; color: #eee; }
      .all a { text-decoration: underline; }
      ::slotted(.merged) { display: block; margin-top: 19px; border: 1px solid #dcdfe8; border-radius: 4px; line-height: 27px; text-align: center; color: #d5d8e2; }
    </style>
    <a class="by" href="#">yusufsmsek yazmış: ${ic("up", 12)}</a>
    <div class="body"><slot></slot></div>
    <div class="all"><a href="#">Devamı için tıklayın...</a></div>`;
  }
}
customElements.define("quote-box", QuoteBox);

class SideCard extends Base {
  render() {
    return `<style>${RESET}
      :host { display: block; border: 1px solid #000; border-radius: 2px; background: #2d3039; }
      h3 { display: flex; align-items: center; gap: 10px; margin: 0; height: 41px; padding: 0 9px; border-bottom: 1px dashed #3f434f; font-size: 13px; color: #f2f2f2; }
      ui-icon { color: #aaa; }
      :host([tight]) h3 { gap: 6px; height: 43px; }
    </style><h3>${ic(this.attr("icon"), this.hasAttribute("tight") ? "14x14" : "17x14")}${this.attr("heading")}</h3><slot></slot>`;
  }
}
customElements.define("side-card", SideCard);

class TopicItem extends Base {
  render() {
    const l = this.attr("letter");
    return `<style>${RESET}
      :host { display: flex; gap: 6px; padding: 10px 8px 11px 12px; border-bottom: 1px dashed #484c59; color: #787e9b; line-height: 19px; }
      :host(:last-of-type) { border: 0; }
      .av { flex: none; width: 24px; height: 24px; margin-top: 2px; border-radius: 50%; background: var(--avatar); color: var(--letter); font-size: 13px; line-height: 24px; text-align: center; }
      a { display: block; font-size: 13px; line-height: 23px; color: #d6d8e0; }
      p { margin: 0; }
    </style>
    <div class="av">${l || ic("flag", 24)}</div>
    <div><a href="#">${this.attr("heading")}</a><p>${this.attr("by")} tarafından başlatıldı · ${this.attr("ago")}<br>dakika önce · Cevaplar: 0</p><p>${this.attr("forum")}</p></div>`;
  }
}
customElements.define("topic-item", TopicItem);

class NewsItem extends Base {
  render() {
    return `<style>${RESET}
      :host { display: block; height: 91px; padding: 12px 12px 0; }
      hr { margin: 0 0 5px; border: 0; height: 3px; background: repeating-linear-gradient(90deg, #667085 0 6px, transparent 6px 9px); }
      a { display: block; font-size: 13px; font-weight: 700; line-height: 22px; color: #d6d9e3; }
      time { display: block; margin-top: 5px; }
    </style><hr><a href="#"><slot></slot></a><time>${this.attr("date")}</time>`;
  }
}
customElements.define("news-item", NewsItem);

class ForumPage extends Base {
  render() {
    return `<style>${RESET}
      :host { display: block; position: relative; overflow: hidden; background: #1e2021; }
      .cols { display: flex; align-items: flex-start; gap: 15px; height: 100%; padding: 0 251px 0 253px; }
      main { flex: 1; min-width: 0; display: flex; flex-direction: column; gap: 12px; }
      .peek { display: flex; align-items: flex-end; height: 40px; margin-bottom: -7px; overflow: hidden; }
      .peek forum-post { flex: 1; }
      .morebar { height: 45px; padding: 0 12px; border: 1px solid #000; background: #3d853a; font-size: 11px; line-height: 43px; }
      aside { width: 250px; display: flex; flex-direction: column; gap: 20px; padding-top: 9px; }
      .acts { display: flex; gap: 4px; margin-bottom: 2px; }
      .toast { position: absolute; right: 20px; bottom: 68px; width: 300px; height: 113px; padding: 25px 12px; border-top: 1px solid #828a9a; border-radius: 4px; background: #4b5261e6; font-size: 13px; font-weight: 700; line-height: 20px; color: #f0f0f0; white-space: nowrap; }
      .toast em { font-style: normal; font-weight: 600; color: #f00; }
      .toast button { position: absolute; right: 12px; top: 12px; color: #a5a9b2; }
      .toast ui-icon { vertical-align: -3px; }
      .notice { position: absolute; left: 0; right: 0; bottom: 0; height: 48px; border-top: 1px solid #818999; background: #505666; font-size: 13px; line-height: 46px; text-align: center; padding-right: 16px; color: #d0d3dc; }
      .notice a { color: #f2f2f2; }
      .notice button { position: absolute; right: 12px; top: -2px; color: #a9adb8; }
    </style>
    <div class="cols">
      <main>
        <div class="peek"><forum-post tail joined="3 Ağustos 2024" posts="158"></forum-post></div>
        <forum-post name="eren23" joined="12 Haziran 2024" posts="54" more date="Dün, 21:42" num="#13" style="--avatar:#33adcc;--letter:#123a4a">
          <quote-box slot="quote">Merhaba arkadaşlar iyi forumlar;<br><br>konu başlığında belirttiğim gibi r7 7800x3d işlemci kullanıyorum.<br><br>Sıvı soğutmam Deepcool LT720 360mm,<br>ekran kartım 4070 super.<br>Anakart MSİ MAG B650 Tomahawk wi-fi 6600mhz</quote-box>
          Knk ısınma sorunu verdken bunlara stokta fanla yetmiyor 360 mm sıvı soğutma zor bela
        </forum-post>
        <a href="#" class="morebar">Daha fazla mesaj var. Görüntülemek ister misin?</a>
        <forum-post name="zorlu123123" joined="13 Kasım 2023" posts="436" date="36 dakika önce" num="#17" style="--avatar:#3d7a1f;--letter:#90e070">
          <quote-box slot="quote">evet doğru hocam.<span class="merged">Mesaj otomatik birleştirildi: 36 dakika önce</span></quote-box>
          değerlerin normal bro
        </forum-post>
        <forum-post nofoot></forum-post>
      </main>
      <aside>
        <div class="acts"><post-button kind="side" icon="file" size="12x14">Yeni mesajlar</post-button><post-button kind="new" icon="edit" size="17x15">Yeni Konu Aç</post-button></div>
        <side-card icon="comments" heading="SON KONULAR">
          <topic-item letter="E" heading="Ekran Parlaklığı tuşu çalışmıyor" by="efeww0011" ago="5" forum="PC Teknik Sorunlar" style="--avatar:#145214;--letter:#3ad63a"></topic-item>
          <topic-item letter="E" heading="Ekran Parlaklığı Tuşu Çalışmıyor" by="efeww0011" ago="9" forum="PC Teknik Sorunlar" style="--avatar:#145214;--letter:#3ad63a"></topic-item>
          <topic-item letter="A" heading="Meslek lisesi okulunda staj" by="anonim08" ago="13" forum="Konu Dışı" style="--avatar:#a8a829;--letter:#2e2e0b"></topic-item>
          <topic-item heading="Okulda bilgi işlem teknisyeni olarak işe girmek" by="dreamuiz" ago="14" forum="Konu Dışı"></topic-item>
        </side-card>
        <side-card icon="dots" heading="En Son İçerikler" tight>
          <news-item date="2024-09-06 20:55">Arcane 2.Sezondan Yeni Tanıtım Paylaşıldı</news-item>
          <news-item date="2024-09-06 20:49">Creature Commandos Dizisinden, Yeni Görseller Paylaşıldı</news-item>
          <news-item>The Penguin Dizisinin Yayın Tarihi Açıklandı</news-item>
        </side-card>
      </aside>
    </div>
    <div class="toast">${ic("horn", 16)} KAÇIRMA! Epic Games'te bu hafta<br>"Football Manager 2024" ÜCRETSİZ oldu!<br>Detaylar için <em>BURAYA</em> tıklayabilirsiniz.<button aria-label="Kapat">${ic("times", "12x15")}</button></div>
    <div class="notice">Bildirimleri açmak için <a href="#">Donanım Arşivi Forum onayını istiyor.</a><button aria-label="Kapat">${ic("times", "13x17")}</button></div>`;
  }
}
customElements.define("forum-page", ForumPage);

class ScrollRail extends Base {
  render() {
    return `<style>
      :host { display: flex; flex-direction: column; align-items: center; width: 17px; padding: 5px 0; box-sizing: border-box; background: #424242; color: #fff; }
      .gap { flex: 627; } .thumb { flex: 103; width: 13px; background: #686868; } .rest { flex: 190; }
    </style>${ic("caretUp", 8)}<div class="gap"></div><div class="thumb"></div><div class="rest"></div>${ic("caret", 8)}`;
  }
}
customElements.define("scroll-rail", ScrollRail);

// ---------- taskbar ----------
class TaskBar extends Base {
  render() {
    const apps = [["tasks"], ["weather", "1", "pink"], ["explorer"], ["brave", "", "", "dot"], ["skype"], ["telegram"],
      ["whatsapp", "1", "violet"], ["instagram"], ["discord", "9+", "red", "dot"], ["hwm", "", "", "run"]];
    const tray = this.hasAttribute("tray");
    return `<style>${RESET}
      :host { display: flex; align-items: center; height: 48px; padding: 0 ${tray ? 20 : 23}px 0 12px; background: #1c1c1c; border-top: 1px solid #3a3a3a; font-size: 11px; color: #eee; }
      button { display: flex; align-items: center; justify-content: center; position: relative; width: 40px; height: 40px; margin: 0 2px; border-radius: 4px; }
      label { display: flex; align-items: center; gap: 10px; width: 220px; height: 32px; margin: 0 2px 0 3px; padding: 0 2px 0 12px; border: 1px solid #505050; border-radius: 16px; background: #3a3a3a; color: #ddd; }
      input { flex: 1; min-width: 0; font-size: 13px; } input::placeholder { color: #ccc; }
      .start { margin: 0; width: 42px; }
      .run { background: #292929; }
      b { position: absolute; top: 3px; right: 2px; min-width: 15px; height: 15px; border-radius: 8px; font-size: 10px; font-weight: 400; line-height: 15px; text-align: center; color: #222; }
      .pink { background: #ff99a4; } .violet { background: #dba0e6; } .red { background: #f05050; color: #fff; }
      s { position: absolute; bottom: 1px; width: 6px; height: 3px; border-radius: 2px; background: #9a9a9a; }
      .run s { width: 16px; background: #dba0e6; }
      .tray { margin-left: auto; display: flex; align-items: center; }
      .tray button { width: auto; margin: 0 8px; }
      .tray .mic { color: #c9a0d4; }
      .tray .net { margin-right: 0; }
      .tray .bell { margin-right: 0; }
      time { text-align: right; line-height: 16px; padding-left: 6px; }
    </style>
    <button class="start" aria-label="Başlat">${ic("win", 23)}</button>
    <label>${ic("glass", 16)}<input aria-label="Ara" placeholder="Ara">${ic("bird", "46x32")}</label>
    ${apps.map(([n, t, c, r]) => `<button class="${r || ""}" aria-label="${n}">${ic(n, 24)}${t ? `<b class="${c}">${t}</b>` : ""}${r ? "<s></s>" : ""}</button>`).join("")}
    <div class="tray">
      ${tray ? `<button aria-label="Gizli simgeler">${ic("chevUp", 14)}</button><button class="mic" aria-label="Mikrofon">${ic("mic", 16)}</button><button class="net" aria-label="Ağ">${ic("tray", 18)}</button><button aria-label="Ses">${ic("vol", 16)}</button>` : ""}
      <time>00:58<br>7.09.2024</time>
      ${tray ? `<button class="bell" aria-label="Bildirimler">${ic("bell", 14)}</button>` : ""}
    </div>`;
  }
}
customElements.define("task-bar", TaskBar);

class BrowserScreen extends Base {
  render() {
    return `<style>
      :host { display: flex; flex-direction: column; height: 100vh; }
      .view { flex: 1; min-height: 0; display: flex; }
      .site { flex: 1; min-width: 0; display: flex; flex-direction: column; }
      forum-nav { z-index: 1; } forum-page { flex: 1; min-height: 0; }
    </style>
    <tab-strip></tab-strip><address-bar></address-bar>
    <div class="view"><div class="site"><forum-nav></forum-nav><forum-page></forum-page></div><scroll-rail></scroll-rail></div>
    <task-bar></task-bar>`;
  }
}

// ---------- desktop ----------
class DesktopIcon extends Base {
  render() {
    return `<style>
      :host { display: flex; flex-direction: column; align-items: center; font-size: 11px; line-height: 15px; text-align: center; color: #fff; }
      .pic { position: relative; height: 48px; margin-bottom: 3px; }
      .link { position: absolute; left: 0; bottom: 0; width: 12px; height: 12px; background: #fff; border: 1px solid #ccc; box-sizing: border-box; color: #1673c9; }
      .link svg { display: block; }
      span { white-space: nowrap; }
    </style>
    <div class="pic">${ic(this.attr("icon"), 48)}${this.hasAttribute("nolink") ? "" : `<div class="link"><svg viewBox="0 0 10 10"><path d="M2 8l5-5M3 2h5v5" fill="none" stroke="currentColor" stroke-width="1.500"/></svg></div>`}</div>
    <span><slot></slot></span>`;
  }
}
customElements.define("desktop-icon", DesktopIcon);

// [depth, label, icon | expander, value, min, max]
const SENSORS = [
  [3, "VDD Misc", "", "1.094 V", "1.094 V", "1.095 V"], [3, "CPU 1P8", "", "1.824 V", "1.823 V", "1.824 V"], [3, "Chipset Core", "", "1.051 V", "1.050 V", "1.051 V"],
  [2, "Temperatures", "temp"],
  [3, "CPU Core", "", "46.0 °C", "46.0 °C", "55.0 °C"], [3, "SYS", "", "39.0 °C", "39.0 °C", "40.0 °C"], [3, "MOS", "", "37.0 °C", "37.0 °C", "37.0 °C"], [3, "PCH", "", "37.0 °C", "37.0 °C", "37.0 °C"],
  [2, "Fans", "fan"],
  [3, "CPU", "", "1015 RPM", "1014 RPM", "1170 RPM"], [3, "PUMP", "", "2404 RPM", "2404 RPM", "2414 RPM"], [3, "SYS4", "", "2226 RPM", "494 RPM", "2264 RPM"], [3, "SYS6", "", "1307 RPM", "1297 RPM", "1324 RPM"],
  [2, "Utilization", "util"],
  [3, "System Memory", "", "39.0 %", "39.0 %", "39.0 %"],
  [1, "AMD Ryzen 7 7800X3D", "cpu"],
  [2, "Voltages", "volt"],
  [3, "VID (Max)", "+", "0.994 V", "0.969 V", "1.131 V"], [3, "CPU VDDCR_VDD", "", "1.033 V", "1.032 V", "1.088 V"], [3, "CPU VDDR_SOC", "", "1.020 V", "1.020 V", "1.020 V"], [3, "CPU VDD_MISC", "", "1.090 V", "1.090 V", "1.090 V"],
  [2, "Temperatures", "temp"],
  [3, "Package", "", "46.1 °C", "46.1 °C", "59.4 °C"], [3, "CCD #0", "", "38.0 °C", "37.5 °C", "51.4 °C"], [3, "Cores (Max)", "+", "34.9 °C", "34.4 °C", "38.6 °C"], [3, "L3 Cache", "", "33.0 °C", "33.0 °C", "33.8 °C"], [3, "SoC", "", "44.7 °C", "44.7 °C", "44.8 °C"],
  [2, "Powers", "power"],
  [3, "Package", "", "21.02 W", "19.85 W", "27.47 W"], [3, "Cores", "+", "5.07 W", "4.24 W", "26.40 W"], [3, "L3 Cache", "", "0.51 W", "0.50 W", "0.62 W"],
  [2, "Clocks", "clock"],
  [3, "Core #0 *", "", "4723 MHz", "4016 MHz", "4849 MHz"], [3, "Core #1", "", "4723 MHz", "3148 MHz", "4949 MHz"], [3, "Core #2 *", "", "4723 MHz", "3959 MHz", "5020 MHz"], [3, "Core #3", "", "4723 MHz", "3148 MHz", "4740 MHz"],
  [3, "Core #4", "", "4723 MHz", "3148 MHz", "4743 MHz"], [3, "Core #5", "", "4723 MHz", "3148 MHz", "4740 MHz"], [3, "Core #6", "", "4723 MHz", "3148 MHz", "4740 MHz"]
];

class HwMonitor extends Base {
  rows() {
    let n = 0;
    return SENSORS.map(([depth, label, mark, ...vals], i) => {
      n = depth == 3 ? n + 1 : 0;
      const next = SENSORS[i + 1];
      let tree = "";
      for (let d = 1; d <= depth; d++) {
        const own = d == depth;
        // vertical guide stops after the last child of a group
        const end = own && depth == 3 && next && next[0] < 3;
        const gone = d == 2 && !own && next && next[0] == 1;
        const box = own && (mark == "+" || depth < 3) ? `<button aria-label="${label}">${mark == "+" ? "+" : "−"}</button>` : "";
        tree += `<i class="${gone ? "" : "v"} ${own ? "h" : ""} ${end ? "end" : ""}">${box}</i>`;
      }
      const lead = depth == 3 ? `<i></i><span class="leaf">${label}</span>` : `${ic(mark, depth == 1 ? 14 : 16)}<span>${label}</span>`;
      return `<tr class="${n % 2 ? "odd" : ""}"><td><div class="tree">${tree}${lead}</div></td>${[0, 1, 2].map(k => `<td>${vals[k] || ""}</td>`).join("")}<td></td></tr>`;
    }).join("");
  }
  render() {
    return `<style>${RESET}
      :host { display: flex; flex-direction: column; overflow: hidden; border: 1px solid #777; border-radius: 8px; background: #f0f0f0; color: #111; font-size: 11px; }
      header { display: flex; align-items: center; gap: 6px; height: 30px; flex: none; padding: 0 17px 0 7px; background: #f3f3f3; }
      header div { margin-left: auto; display: flex; gap: 35px; } header button { display: flex; }
      nav { display: flex; gap: 14px; height: 20px; flex: none; padding: 0 7px; background: #fff; border-bottom: 1px solid #ddd; }
      .list { flex: 1; min-height: 0; display: flex; overflow: hidden; border: solid #777; border-width: 1px 0 0 1px; background: #fff; }
      table { flex: 1; align-self: flex-start; table-layout: fixed; border-collapse: collapse; width: 100%; }
      th { height: 19px; padding: 0 7px; text-align: left; font-weight: 400; background: #f0f0f0; border: solid #a0a0a0; border-width: 0 1px 1px 0; }
      td { height: 18px; padding: 0 8px; line-height: 17px; white-space: nowrap; }
      td:first-child { padding: 0 0 0 18px; }
      .odd td:not(:first-child), .odd .leaf { background: #f0f0f0; }
      .tree { display: flex; align-items: center; height: 18px; }
      .tree i { position: relative; display: flex; align-items: center; justify-content: center; width: 19px; height: 18px; flex: none; }
      .v { background: repeating-linear-gradient(#888 0 1px, #fff 1px 2px) 9px 0 / 1px 100% no-repeat; }
      .end { background-size: 1px 10px; }
      .h::after { content: ""; position: absolute; left: 10px; right: 0; top: 10px; height: 1px; background: repeating-linear-gradient(90deg, #888 0 1px, transparent 1px 2px); }
      .tree button { z-index: 1; width: 9px; height: 9px; border: 1px solid #888; background: #fff; font-size: 9px; line-height: 6px; text-align: center; }
      .tree span { padding-left: 4px; } .tree .leaf { flex: 1; padding-left: 3px; line-height: 18px; }
      .rail { width: 16px; background: #f0f0f0; display: flex; flex-direction: column; align-items: center; border-top: 0; }
      .rail::before { content: ""; flex: 79; } .rail::after { content: ""; flex: 466; }
      .rail b { flex: 174; width: 2px; background: #858585; }
      footer { display: flex; align-items: center; height: 21px; flex: none; padding-right: 19px; border-top: 1px solid #fff; }
      footer span { flex: 1; } footer i { width: 31px; height: 16px; margin-left: 2px; border: solid #a0a0a0; border-width: 1px 0 0 1px; }
    </style>
    <header>${ic("hwm", 16)}<span>HWMonitor</span><div><button aria-label="Küçült">${ic("min", 12)}</button><button aria-label="Büyüt">${ic("max", 12)}</button><button aria-label="Kapat">${ic("close", 11)}</button></div></header>
    <nav><button>File</button><button>View</button><button>Tools</button><button>Help</button></nav>
    <div class="list">
      <table><colgroup><col style="width:238px"><col style="width:87px"><col style="width:87px"><col style="width:87px"><col></colgroup>
      <thead><tr><th>Sensor</th><th>Value</th><th>Min</th><th>Max</th><th></th></tr></thead><tbody>${this.rows()}</tbody></table>
      <div class="rail"><b></b></div>
    </div>
    <footer><span>Ready</span><i></i><i></i><i></i></footer>`;
  }
}
customElements.define("hw-monitor", HwMonitor);

class DesktopScreen extends Base {
  render() {
    const icons = [["bin", "Geri<br>Dönüşü...", 1], ["cs", "Counter-Str...<br>2"], ["shark", "Darmoshark<br>Driver"],
      ["stremio", "Stremio"], ["faceit", "FACEIT"], ["brave", "Brave"],
      ["nvidia", "GeForce<br>Experience"], ["faceitac", "FACEIT AC"], ["bf", "Battlefield™<br>2042"],
      ["lol", "League of<br>Legends"], ["msi", "MSI<br>Afterburner"], ["ea", "EA"],
      ["ghub", "Logitech G<br>HUB"], ["wallpaper", "Wallpaper<br>Engine"], ["cpuid", "CPUID<br>HWMonitor"],
      ["edge", "Microsoft<br>Edge"], ["firestorm", "FireStorm"], ["books", "New Config", 1],
      ["riot", "Riot Client"], ["epic", "Epic Games<br>Launcher"], ["zip", "fallen", 1],
      ["riot", "Riot İstemcisi"], ["isl", "ISLC v1.0.3.0", 1], ["books", "New Config<br>(1)", 1],
      ["steam", "Steam"], ["instagram", "Instagram"], ["zip", "m0nesy", 1],
      ["discord", "Discord"], ["zip", "wicadia", 1], ["text", "autoexec", 1]];
    return `<style>
      :host { display: flex; flex-direction: column; height: 100vh; background: #000; }
      .desk { flex: 1; min-height: 0; position: relative; padding-top: 7px; }
      .grid { display: grid; grid-template-columns: repeat(3, 76px); grid-auto-rows: 100px; }
      /* free floating window on the desktop */
      hw-monitor { position: absolute; left: 216px; top: 82px; width: 634px; height: 792px; }
    </style>
    <div class="desk"><div class="grid">${icons.map(([i, t, n]) => `<desktop-icon icon="${i}" ${n ? "nolink" : ""}>${t}</desktop-icon>`).join("")}</div>
    <hw-monitor></hw-monitor></div>
    <task-bar tray></task-bar>`;
  }
}
customElements.define("browser-screen", BrowserScreen);
customElements.define("desktop-screen", DesktopScreen);
</script>
</body>
</html>
